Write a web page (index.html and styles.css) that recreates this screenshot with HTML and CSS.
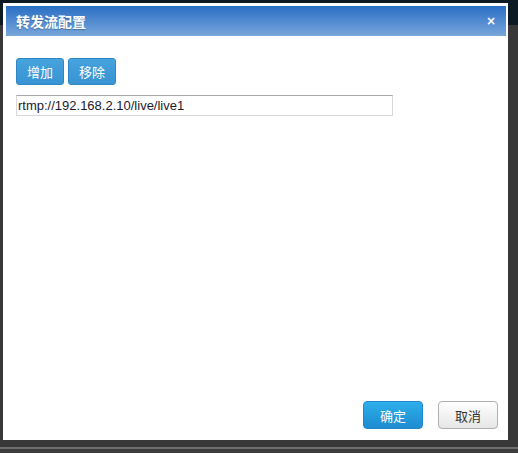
FILE: index.html
```html
<!DOCTYPE html>
<html lang="zh">
<head>
<meta charset="utf-8">
<title>转发流配置</title>
<link rel="stylesheet" href="styles.css">
</head>
<body>
<div class="dialog">
  <div class="header">
    <span class="title">转发流配置</span>
    <span class="close">×</span>
  </div>
  <div class="content">
    <div class="toolbar">
      <button class="btn btn-blue">增加</button>
      <button class="btn btn-blue">移除</button>
    </div>
    <input class="url" type="text" value="rtmp://192.168.2.10/live/live1">
  </div>
  <div class="footer">
    <button class="fbtn fbtn-ok">确定</button>
    <button class="fbtn fbtn-cancel">取消</button>
  </div>
</div>
</body>
</html>
```

FILE: styles.css
```css
html, body {
  margin: 0;
  padding: 0;
}
body {
  width: 518px;
  height: 453px;
  overflow: hidden;
  background:
    linear-gradient(to bottom, transparent 447px, #6e6e6e 447px, #6e6e6e 449px, #3c3c3c 449px),
    linear-gradient(to bottom, #0c1a24 0, #0c1a24 25px, #383838 25px);
  font-family: "Liberation Sans", "Noto Sans CJK SC", sans-serif;
}
.dialog {
  margin: 3px 0 0 3px;
  width: 505px;
  height: 437px;
  background: #fff;
  box-sizing: border-box;
  padding: 3px 2px 0 3px;
  display: flex;
  flex-direction: column;
}
.header {
  height: 30px;
  background: linear-gradient(to bottom, #2a6ec4, #78a6dc);
  display: flex;
  align-items: center;
  justify-content: space-between;
  padding: 0 10px 0 10px;
  flex: none;
}
.title {
  color: #fff;
  font-family: "Noto Sans CJK SC", sans-serif;
  font-weight: bold;
  font-size: 14px;
  text-shadow: 0 1px 1px rgba(0,0,0,0.25);
}
.close {
  color: #fff;
  font-family: "DejaVu Sans", sans-serif;
  font-weight: bold;
  font-size: 12px;
  line-height: 1;
  margin-top: -1px;
}
.content {
  flex: 1;
  padding: 22px 0 0 10px;
}
.toolbar {
  display: flex;
  gap: 4px;
}
.btn {
  width: 48px;
  height: 27px;
  border-radius: 3px;
  font-family: "Noto Sans CJK SC", sans-serif;
  font-size: 13px;
  color: #fff;
  padding: 0;
  cursor: pointer;
}
.btn-blue {
  background: linear-gradient(to bottom, #45a3dd, #3893d2);
  border: 1px solid #2f86c4;
}
.url {
  display: block;
  margin-top: 10px;
  width: 377px;
  height: 21px;
  box-sizing: border-box;
  border: 1px solid #d8d8dc;
  border-top-color: #a8a8b0;
  padding: 0 0 0 1px;
  font-family: "Liberation Sans", sans-serif;
  font-size: 13px;
  color: #1a1a30;
  outline: none;
}
.footer {
  flex: none;
  display: flex;
  justify-content: flex-end;
  gap: 15px;
  padding: 0 8px 11px 0;
}
.fbtn {
  width: 60px;
  height: 28px;
  border-radius: 4px;
  font-family: "Noto Sans CJK SC", sans-serif;
  font-size: 13px;
  padding: 0;
  cursor: pointer;
}
.fbtn-ok {
  color: #fff;
  background: linear-gradient(to bottom, #2cafea, #1f8bd0);
  border: 1px solid #1f88cc;
}
.fbtn-cancel {
  color: #333;
  background: linear-gradient(to bottom, #ffffff, #e6e6e6);
  border: 1px solid #b0b0b0;
}
```
